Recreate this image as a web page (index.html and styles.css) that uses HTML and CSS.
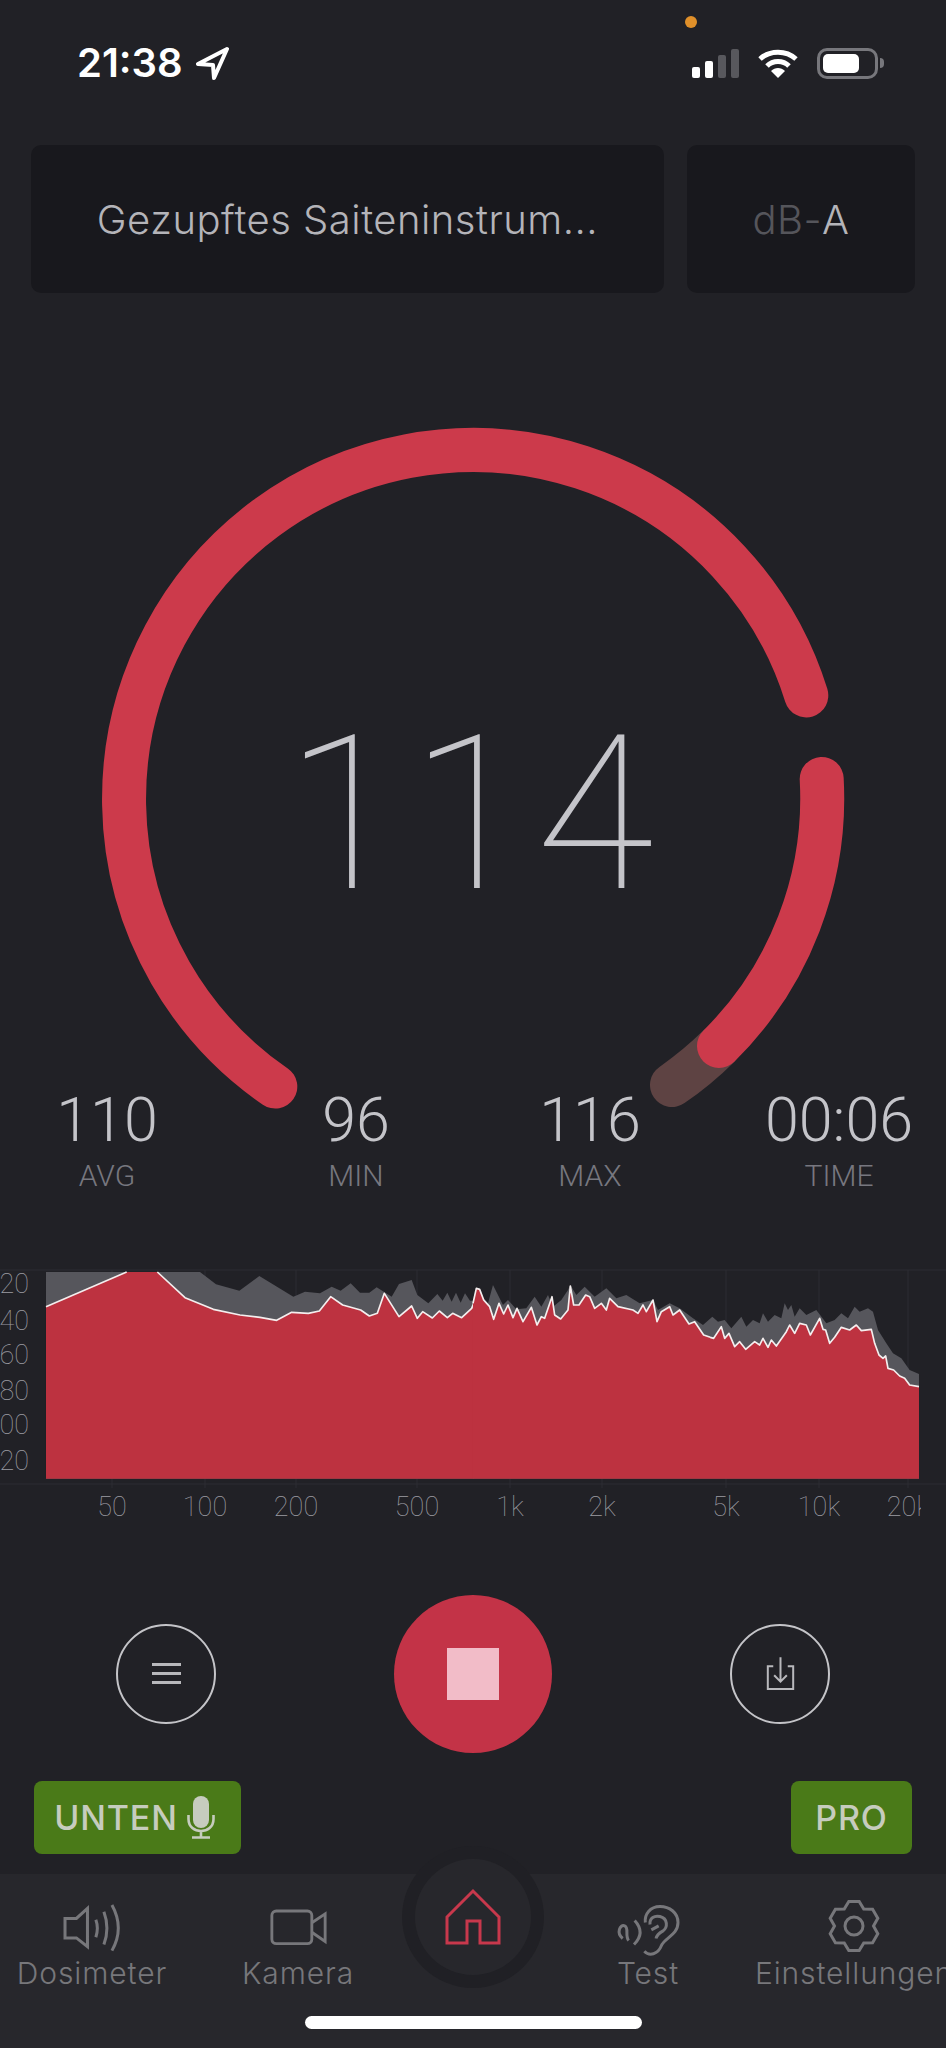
FILE: index.html
```html
<!DOCTYPE html>
<html lang="de">
<head>
    <meta charset="UTF-8">
    <meta name="viewport" content="width=device-width, initial-scale=1.0">
    <title>Schallpegel</title>
    <link rel="stylesheet" href="styles.css">
</head>
<body>
    <div class="statusbar">
        <span class="orange-dot"></span>
        <div class="status-left">
            <span class="clock">21:38</span>
            <svg class="loc-arrow" viewBox="196 46 34 35"><path d="M228 49 L199 64 L214 65 L215 78 Z"/></svg>
        </div>
        <div class="status-right">
            <svg class="signal" viewBox="0 0 48 31">
                <rect x="0" y="19" width="8" height="11" rx="2" fill="#fff"/>
                <rect x="13" y="13" width="8" height="17" rx="2" fill="#fff"/>
                <rect x="26" y="7" width="8" height="23" rx="2" fill="#58585d"/>
                <rect x="39" y="1" width="8" height="29" rx="2" fill="#58585d"/>
            </svg>
            <svg class="wifi" viewBox="0 0 42 31">
                <path d="M3 11 C13 2 29 2 39 11" fill="none" stroke="#fff" stroke-width="5"/>
                <path d="M10 18 C16 12 26 12 32 18" fill="none" stroke="#fff" stroke-width="5"/>
                <path d="M14 23 C18 19 24 19 28 23 L21 30 Z" fill="#fff"/>
            </svg>
            <div class="battery"><div class="battery-fill"></div></div>
            <span class="battery-nub"></span>
        </div>
    </div>

    <div class="selectors">
        <div class="selector selector-name">Gezupftes Saiteninstrum...</div>
        <div class="selector selector-unit"><span class="dim">dB-</span>A</div>
    </div>

    <div class="gauge">
        <svg class="gauge-svg" viewBox="0 0 946 804">
            <path class="arc" d="M275.3 793.6 A349 349 0 1 1 806.3 402.4"/>
            <path class="arc arc-ghost" d="M719 753 A349 349 0 0 1 672 792"/>
            <path class="arc" d="M821.700 486 A349 349 0 0 1 719 753"/>
        </svg>
        <div class="gauge-value">114</div>
    </div>

    <div class="stats">
        <div class="stat"><div class="stat-num">110</div><div class="stat-label">AVG</div></div>
        <div class="stat stat-wide"><div class="stat-num">96</div><div class="stat-label">MIN</div></div>
        <div class="stat stat-narrow"><div class="stat-num">116</div><div class="stat-label">MAX</div></div>
        <div class="stat stat-wide"><div class="stat-num">00:06</div><div class="stat-label">TIME</div></div>
    </div>

    <svg class="chart" viewBox="0 0 946 280">
        <defs><clipPath id="xclip"><rect x="0" y="230" width="921" height="50"/></clipPath></defs>
        <g class="grid">
            <line x1="0" y1="20" x2="946" y2="20"/>
            <line x1="0" y1="234" x2="946" y2="234"/>
            <line x1="112" y1="20" x2="112" y2="238"/>
            <line x1="205" y1="20" x2="205" y2="238"/>
            <line x1="296" y1="20" x2="296" y2="238"/>
            <line x1="417" y1="20" x2="417" y2="238"/>
            <line x1="510" y1="20" x2="510" y2="238"/>
            <line x1="602" y1="20" x2="602" y2="238"/>
            <line x1="726" y1="20" x2="726" y2="238"/>
            <line x1="819" y1="20" x2="819" y2="238"/>
            <line x1="908" y1="20" x2="908" y2="238"/>
        </g>
        <g transform="scale(0.33333)">
            <polygon class="peak" points="138,66 600,66 648,103 718,122 778,78 880,140 915,125 960,130 995,110 1022,122 1052,100 1080,128 1108,128 1130,112 1175,140 1197,102 1235,90 1252,135 1285,160 1312,132 1328,152 1342,128 1355,155 1368,128 1382,158 1395,130 1410,152 1421,152 1421,686 138,686"/>
            <polygon class="level" points="138,170 380,66 472,66 555,143 640,178 720,195 780,202 830,211 875,187 925,190 958,183 992,140 1028,165 1082,180 1108,198 1132,190 1153,130 1197,200 1235,168 1252,205 1268,185 1297,204 1318,183 1342,203 1358,190 1385,203 1415,175 1421,160 1421,686 138,686"/>
            <polyline class="level-line" points="138,170 380,66"/>
            <polyline class="level-line" points="472,66 555,143 640,178 720,195 780,202 830,211 875,187 925,190 958,183 992,140 1028,165 1082,180 1108,198 1132,190 1153,130 1197,200 1235,168 1252,205 1268,185 1297,204 1318,183 1342,203 1358,190 1385,203 1415,175 1421,160"/>
            <g transform="translate(1419 0)">
                <polygon class="peak" points="0,152 10,118 20,130 45,160 60,105 75,135 90,165 105,150 130,178 160,175 185,140 205,170 225,135 240,170 265,150 285,120 292,105 310,135 335,110 365,140 400,115 430,145 460,135 500,160 540,150 555,180 590,160 620,175 660,205 690,225 718,200 735,215 755,210 775,235 805,200 820,230 840,210 860,220 870,190 885,215 905,195 925,205 935,160 945,180 955,165 965,200 980,175 1000,195 1030,180 1060,220 1085,210 1105,190 1125,205 1145,170 1160,185 1185,175 1200,185 1215,240 1240,280 1260,310 1285,325 1310,360 1338,372 1338,686 0,686"/>
                <polygon class="level" points="0,160 10,115 20,118 32,150 50,170 62,208 78,160 92,192 105,165 120,203 132,175 150,215 175,172 192,225 205,200 215,205 237,140 245,195 263,207 285,180 292,108 302,165 318,165 338,135 350,140 365,175 385,160 400,180 410,145 435,170 480,180 495,190 510,165 520,185 540,150 552,215 565,185 590,170 600,195 620,180 648,222 665,215 692,255 712,262 722,265 745,230 755,265 768,250 785,290 800,275 818,298 845,275 860,285 870,265 885,292 895,270 910,288 940,245 950,225 965,250 980,220 1000,225 1012,255 1040,205 1050,238 1058,240 1070,280 1085,262 1105,232 1130,240 1150,225 1165,242 1195,238 1205,280 1218,315 1230,325 1238,318 1245,355 1262,360 1280,378 1295,385 1310,405 1338,410 1338,686 0,686"/>
                <polyline class="level-line" points="0,160 10,115 20,118 32,150 50,170 62,208 78,160 92,192 105,165 120,203 132,175 150,215 175,172 192,225 205,200 215,205 237,140 245,195 263,207 285,180 292,108 302,165 318,165 338,135 350,140 365,175 385,160 400,180 410,145 435,170 480,180 495,190 510,165 520,185 540,150 552,215 565,185 590,170 600,195 620,180 648,222 665,215 692,255 712,262 722,265 745,230 755,265 768,250 785,290 800,275 818,298 845,275 860,285 870,265 885,292 895,270 910,288 940,245 950,225 965,250 980,220 1000,225 1012,255 1040,205 1050,238 1058,240 1070,280 1085,262 1105,232 1130,240 1150,225 1165,242 1195,238 1205,280 1218,315 1230,325 1238,318 1245,355 1262,360 1280,378 1295,385 1310,405 1338,410"/>
            </g>
        </g>
        <g class="y-labels">
            <text x="29" y="43">20</text>
            <text x="29" y="80">40</text>
            <text x="29" y="114">60</text>
            <text x="29" y="150">80</text>
            <text x="29" y="184">100</text>
            <text x="29" y="220">120</text>
        </g>
        <g class="x-labels" clip-path="url(#xclip)">
            <text x="112" y="266">50</text>
            <text x="205" y="266">100</text>
            <text x="296" y="266">200</text>
            <text x="417" y="266">500</text>
            <text x="510" y="266">1k</text>
            <text x="602" y="266">2k</text>
            <text x="726" y="266">5k</text>
            <text x="819" y="266">10k</text>
            <text x="908" y="266">20k</text>
        </g>
    </svg>

    <div class="controls">
        <div class="round-btn">
            <div class="burger"><span></span><span></span><span></span></div>
        </div>
        <div class="stop-btn"><div class="stop-square"></div></div>
        <div class="round-btn">
            <svg class="export" viewBox="0 0 32 38">
                <path d="M8 11 H2 V36 H30 V11 H24"/>
                <path d="M16 1 V28 M9 21 L16 28 L23 21"/>
            </svg>
        </div>
    </div>

    <div class="badges">
        <div class="badge badge-mic">UNTEN
            <svg class="mic" viewBox="0 0 28 43">
                <rect x="6" y="0" width="16" height="32" rx="8" fill="#c6ccbe"/>
                <path d="M1.500 19 V23 C1.500 39 26.500 39 26.500 23 V19 M14 35 V41 M5 41.500 H23" fill="none" stroke="#c6ccbe" stroke-width="2.600"/>
            </svg>
        </div>
        <div class="badge badge-pro">PRO</div>
    </div>

    <div class="tabbar">
        <div class="tab">
            <svg class="tab-icon" width="59" height="49" viewBox="190 160 176 146">
                <path d="M196 206 H230 L263 176 V290 L230 264 H196 Z"/>
                <path d="M288 210 Q297 235 288 262 M312 186 Q330 235 312 284 M336 166 Q374 235 336 302"/>
            </svg>
            <span class="tab-label">Dosimeter</span>
        </div>
        <div class="tab">
            <svg class="tab-icon" width="59" height="49" viewBox="800 160 186 146">
                <rect x="809" y="181" width="126" height="103" rx="14"/>
                <path d="M935 218 L977 190 V277 L935 248"/>
            </svg>
            <span class="tab-label">Kamera</span>
        </div>
        <div class="tab-home">
            <div class="home-ring">
                <div class="home-inner">
                    <svg class="home-icon" viewBox="0 0 58 58">
                        <path d="M3 29 L29 3 L55 29 V55 H36 V33 H23 V55 H3 Z"/>
                    </svg>
                </div>
            </div>
        </div>
        <div class="tab">
            <svg class="tab-icon ear" width="64" height="55" viewBox="50 32 192 164">
                <path d="M135 176 C150 192 176 186 186 160 C195 136 236 128 236 90 C236 60 210 42 182 42 C152 42 135 66 138 90"/>
                <path d="M152 96 C150 76 166 68 182 72 C206 78 206 105 190 116 C176 124 172 130 170 138 M156 112 L178 100"/>
                <path d="M70 138 C50 122 62 94 76 100 C90 106 76 130 88 144 M106 84 C128 108 128 132 104 156"/>
            </svg>
            <span class="tab-label">Test</span>
        </div>
        <div class="tab">
            <svg class="tab-icon gear" width="54" height="52" viewBox="-27 -26 54 52">
                <path d="M-5.200 -24.500 L5.200 -24.500 L9.750 -16.900 L18.600 -16.750 L23.800 -7.750 L19.500 0 L23.800 7.750 L18.600 16.750 L9.750 16.900 L5.200 24.500 L-5.200 24.500 L-9.750 16.900 L-18.600 16.750 L-23.800 7.750 L-19.500 0 L-23.800 -7.750 L-18.600 -16.750 L-9.750 -16.900 Z"/>
                <circle cx="0" cy="0" r="9"/>
            </svg>
            <span class="tab-label">Einstellungen</span>
        </div>
        <div class="home-indicator"></div>
    </div>
</body>
</html>
```

FILE: styles.css
```css
* {
    box-sizing: border-box;
}
html, body {
    margin: 0;
    height: 2048px;
    overflow: hidden;
}
body {
    width: 946px;
    background: #212126;
    font-family: Inter, "Liberation Sans", sans-serif;
    color: #c4c4c9;
}

.statusbar {
    position: relative;
    height: 145px;
    padding: 44px 62px 0 77px;
    display: flex;
    justify-content: space-between;
    align-items: flex-start;
}
.orange-dot {
    position: absolute;
    left: 685px;
    top: 16px;
    width: 12px;
    height: 12px;
    border-radius: 50%;
    background: #e0902a;
}
.status-left {
    display: flex;
    align-items: center;
    gap: 12px;
}
.clock {
    font-weight: 600;
    font-size: 40px;
    line-height: 38px;
    color: #fff;
}
.loc-arrow {
    width: 34px;
    height: 35px;
    fill: none;
    stroke: #fff;
    stroke-width: 4;
    stroke-linejoin: round;
}
.status-right {
    display: flex;
    align-items: center;
    height: 38px;
}
.signal {
    width: 48px;
    height: 31px;
}
.wifi {
    width: 42px;
    height: 31px;
    margin-left: 17px;
}
.battery {
    width: 61px;
    height: 31px;
    margin-left: 18px;
    padding: 3px;
    border: 3px solid #77777c;
    border-radius: 10px;
}
.battery-fill {
    width: 36px;
    height: 100%;
    background: #fff;
    border-radius: 5px;
}
.battery-nub {
    width: 4px;
    height: 10px;
    margin-left: 2px;
    background: #77777c;
    border-radius: 0 4px 4px 0;
}

.selectors {
    display: flex;
    gap: 23px;
    height: 148px;
    padding: 0 31px;
}
.selector {
    display: flex;
    align-items: center;
    justify-content: center;
    background: #18181d;
    border-radius: 10px;
    font-size: 40px;
    font-weight: 300;
    letter-spacing: 0.5px;
    color: #b4b4b9;
    white-space: nowrap;
}
.selector-name {
    width: 633px;
}
.selector-unit {
    width: 228px;
}
.dim {
    color: #55555b;
}

.gauge {
    position: relative;
    height: 804px;
}
.gauge-svg {
    display: block;
    width: 946px;
    height: 804px;
    overflow: visible;
}
.arc {
    fill: none;
    stroke: #cc3a4b;
    stroke-width: 44;
    stroke-linecap: round;
}
.arc-ghost {
    stroke: #5e4343;
}
.gauge-value {
    position: absolute;
    left: 0;
    right: 0;
    top: 412px;
    text-align: center;
    font-family: Roboto, sans-serif;
    font-weight: 100;
    font-size: 216px;
    line-height: 220px;
    letter-spacing: 7px;
    color: #c4c4c9;
}

.stats {
    display: flex;
    height: 165px;
    margin-top: -12px;
    padding-left: 27px;
    position: relative;
}
.stat {
    width: 160px;
    text-align: center;
}
.stat-wide {
    margin-left: 89px;
}
.stat-narrow {
    margin-left: 74px;
}
.stat-num {
    font-family: Roboto, sans-serif;
    font-weight: 300;
    font-size: 61px;
    line-height: 70px;
    color: #c4c4c9;
}
.stat-label {
    font-family: Roboto, sans-serif;
    font-weight: 300;
    font-size: 30px;
    line-height: 36px;
    margin-top: 3px;
    color: #77777f;
}

.chart {
    display: block;
    width: 946px;
    height: 280px;
}
.grid line {
    stroke: #2c2c32;
    stroke-width: 1;
}
.peak {
    fill: #56565c;
}
.level {
    fill: #bd3240;
}
.level-line {
    fill: none;
    stroke: #f4eeee;
    stroke-width: 5;
    stroke-linejoin: round;
}
.y-labels text, .x-labels text {
    font-family: Roboto, sans-serif;
    font-weight: 100;
    font-size: 27px;
    fill: #9c9ca2;
}
.y-labels text {
    text-anchor: end;
}
.x-labels text {
    text-anchor: middle;
}

.controls {
    display: flex;
    align-items: center;
    height: 159px;
    margin-top: 64px;
    padding: 0 116px;
    justify-content: space-between;
}
.round-btn {
    width: 100px;
    height: 100px;
    border: 2.5px solid #c4c4c8;
    border-radius: 50%;
    display: flex;
    align-items: center;
    justify-content: center;
}
.burger {
    width: 29px;
}
.burger span {
    display: block;
    height: 3px;
    margin: 6px 0;
    background: #b8b8bc;
}
.export {
    width: 29px;
    height: 35px;
    fill: none;
    stroke: #b8b8bc;
    stroke-width: 2.2;
}
.stop-btn {
    width: 158px;
    height: 158px;
    border-radius: 50%;
    background: #c33347;
    display: flex;
    align-items: center;
    justify-content: center;
}
.stop-square {
    width: 52px;
    height: 52px;
    background: #f2bcc8;
}

.badges {
    display: flex;
    justify-content: space-between;
    height: 73px;
    margin-top: 28px;
    padding: 0 34px;
}
.badge {
    display: flex;
    align-items: center;
    justify-content: center;
    background: #4a7a18;
    border-radius: 8px;
    font-size: 34px;
    font-weight: 500;
    letter-spacing: 0.8px;
    color: #c6ccbe;
}
.badge-mic {
    width: 207px;
    gap: 9px;
    padding-right: 6px;
}
.mic {
    width: 28px;
    height: 43px;
}
.badge-pro {
    width: 121px;
}

.tabbar {
    position: relative;
    display: grid;
    grid-template-columns: 184px 228px 122px 228px 184px;
    height: 174px;
    margin-top: 20px;
    background: #27272c;
}
.tab {
    display: flex;
    flex-direction: column;
    align-items: center;
    padding-top: 29px;
}
.tab-icon {
    display: block;
    fill: none;
    stroke: #77777b;
    stroke-width: 9;
}
.tab-icon.ear {
    margin-bottom: -6px;
}
.tab-icon.gear {
    margin-top: -3px;
    stroke-width: 3;
}
.tab-label {
    margin-top: 3px;
    font-size: 30px;
    font-weight: 300;
    letter-spacing: 0.9px;
    line-height: 36px;
    color: #77777b;
    white-space: nowrap;
}
.tab-home {
    position: relative;
}
.home-ring {
    position: absolute;
    left: -10px;
    top: -28px;
    width: 142px;
    height: 142px;
    padding: 13px;
    border-radius: 50%;
    background: #202025;
}
.home-inner {
    width: 116px;
    height: 116px;
    border-radius: 50%;
    background: #27272c;
    display: flex;
    align-items: center;
    justify-content: center;
}
.home-icon {
    width: 58px;
    height: 58px;
    fill: none;
    stroke: #c8384c;
    stroke-width: 3;
}
.home-indicator {
    position: absolute;
    left: 305px;
    top: 142px;
    width: 337px;
    height: 13px;
    border-radius: 7px;
    background: #fff;
}
```
